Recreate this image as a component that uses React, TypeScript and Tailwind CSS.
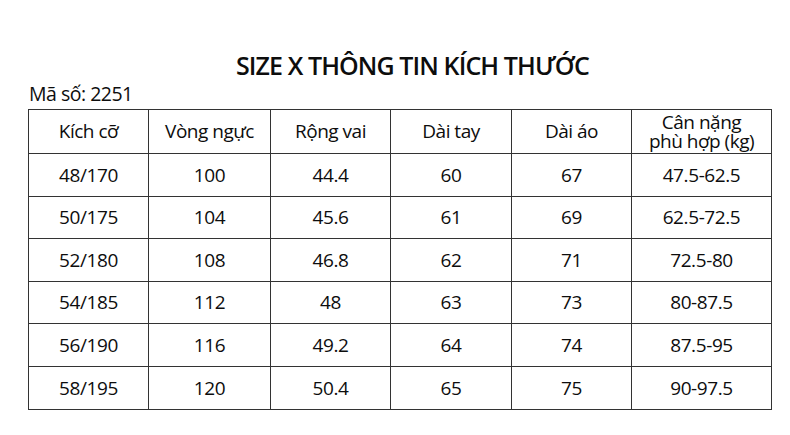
const HEADERS = ["Kích cỡ", "Vòng ngực", "Rộng vai", "Dài tay", "Dài áo"];

const ROWS = [
  ["48/170", "100", "44.4", "60", "67", "47.5-62.5"],
  ["50/175", "104", "45.6", "61", "69", "62.5-72.5"],
  ["52/180", "108", "46.8", "62", "71", "72.5-80"],
  ["54/185", "112", "48", "63", "73", "80-87.5"],
  ["56/190", "116", "49.2", "64", "74", "87.5-95"],
  ["58/195", "120", "50.4", "65", "75", "90-97.5"],
];

const GRID = "grid grid-cols-[120px_122px_120px_121px_120px_139px]";

export default function App() {
  return (
    <div
      className="w-[790px] h-[435px] bg-white text-[#0d0d0d] overflow-hidden"
      style={{ fontFamily: '"Open Sans", "Noto Sans", sans-serif' }}
    >
      <div className="pt-[49px] pl-[236px] text-[25px] leading-[32px] tracking-[-0.9px] font-semibold">
        SIZE X THÔNG TIN KÍCH THƯỚC
      </div>
      <div className="pl-[29px] text-[19.5px] leading-[26px] tracking-[-0.5px]">
        Mã số: 2251
      </div>
      <div className="ml-[28px] mt-[2px] w-[744px] border-[1.5px] border-[#333]">
        <div className={`${GRID} h-[44px] border-b-[1.5px] border-[#333]`}>
          {HEADERS.map((h) => (
            <div
              key={h}
              className="flex items-center justify-center border-r-[1.5px] border-[#333] text-[19px] tracking-[-0.5px]"
            >
              {h}
            </div>
          ))}
          <div className="flex flex-col items-center justify-center text-[19px] leading-[19px] tracking-[-0.5px]">
            <span>Cân nặng</span>
            <span>phù hợp (kg)</span>
          </div>
        </div>
        {ROWS.map((row, i) => (
          <div
            key={row[0]}
            className={`${GRID} h-[42.5px] ${i < ROWS.length - 1 ? "border-b-[1.5px] border-[#333]" : ""}`}
          >
            {row.map((cell, j) => (
              <div
                key={j}
                className={`flex items-center justify-center text-[19px] tracking-[-0.4px] ${
                  j < row.length - 1 ? "border-r-[1.5px] border-[#333]" : ""
                }`}
              >
                {cell}
              </div>
            ))}
          </div>
        ))}
      </div>
    </div>
  );
}
